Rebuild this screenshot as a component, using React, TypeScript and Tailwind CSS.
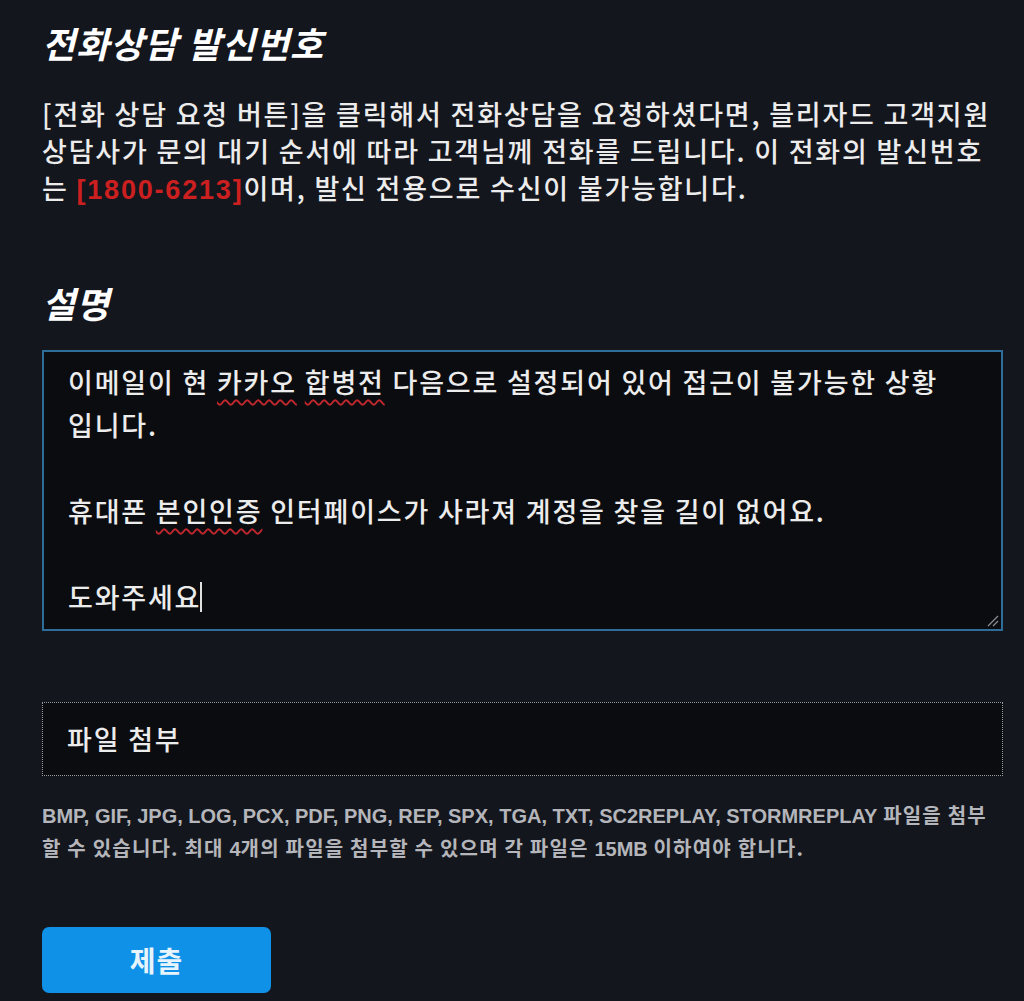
import React from "react";

const KR = { fontFamily: '"Noto Sans CJK KR", "Noto Sans", sans-serif' };
const LAT = { fontFamily: '"Liberation Sans", "Noto Sans CJK KR", sans-serif' };

function Wavy({ children }: { children: React.ReactNode }) {
  return (
    <span className="underline decoration-wavy decoration-[#c0272d] decoration-[1.5px] underline-offset-[6px]">
      {children}
    </span>
  );
}

export default function App() {
  return (
    <div className="w-[1024px] h-[1001px] overflow-hidden bg-[#14161d] text-[#ececec]" style={KR}>
      <div className="pl-[42px] pr-[21px] pt-[18px]">
        <h2 className="text-[36px] leading-[48px] font-bold italic tracking-[1px] text-white">전화상담 발신번호</h2>
        <p className="mt-[29px] text-[27px] leading-[37px] font-medium tracking-[1.8px] whitespace-nowrap">
          [전화 상담 요청 버튼]을 클릭해서 전화상담을 요청하셨다면, 블리자드 고객지원
          <br />
          상담사가 문의 대기 순서에 따라 고객님께 전화를 드립니다. 이 전화의 발신번호
          <br />
          는 <span className="text-[#cc1f1f] font-bold" style={LAT}>[1800-6213]</span>이며, 발신 전용으로 수신이 불가능합니다.
        </p>

        <h2 className="mt-[69px] text-[36px] leading-[48px] font-bold italic tracking-[1px] text-white">설명</h2>

        <div className="mt-[24px] relative h-[281px] border-2 border-[#2e6d9a] bg-[#0b0c10] pl-[24px] pr-[20px] pt-[8px]">
          <div className="text-[27px] leading-[43px] font-medium tracking-[1.8px] whitespace-nowrap">
            <div>
              이메일이 현 <Wavy>카카오</Wavy> <Wavy>합병전</Wavy> 다음으로 설정되어 있어 접근이 불가능한 상황
            </div>
            <div>입니다.</div>
            <div>&nbsp;</div>
            <div>
              휴대폰 <Wavy>본인인증</Wavy> 인터페이스가 사라져 계정을 찾을 길이 없어요.
            </div>
            <div>&nbsp;</div>
            <div className="flex items-center">
              도와주세요
              <span className="inline-block w-[2px] h-[30px] bg-[#e0e0e0] ml-[-1px]" />
            </div>
          </div>
          <svg className="absolute right-[2px] bottom-[2px]" width="14" height="14" viewBox="0 0 14 14">
            <line x1="13" y1="3" x2="3" y2="13" stroke="#8a8d93" strokeWidth="1.2" />
            <line x1="13" y1="8" x2="8" y2="13" stroke="#8a8d93" strokeWidth="1.2" />
          </svg>
        </div>

        <div className="mt-[71px] h-[74px] border border-dotted border-[#9a9ca3] bg-[#0b0c10] pl-[24px] flex items-center">
          <span className="text-[27px] font-medium tracking-[1.8px] text-[#ececec]">파일 첨부</span>
        </div>

        <div className="mt-[22px] text-[20px] font-bold text-[#b4b6bb] tracking-[1.2px] whitespace-nowrap">
          <div className="h-[33px] leading-[33px]">
            <span className="tracking-normal" style={LAT}>
              BMP, GIF, JPG, LOG, PCX, PDF, PNG, REP, SPX, TGA, TXT, SC2REPLAY, STORMREPLAY
            </span>{" "}
            파일을 첨부
          </div>
          <div className="h-[33px] leading-[33px]">
            할 수 있습니다. 최대 <span className="tracking-normal" style={LAT}>4</span>개의 파일을 첨부할 수 있으며 각 파일은{" "}
            <span className="tracking-normal" style={LAT}>15MB</span> 이하여야 합니다.
          </div>
        </div>

        <button className="mt-[63px] w-[229px] h-[66px] rounded-[7px] bg-[#0f91e8] text-[28px] font-bold tracking-[1px] text-[#e8f4fc] flex items-center justify-center">
          제출
        </button>
      </div>
    </div>
  );
}
